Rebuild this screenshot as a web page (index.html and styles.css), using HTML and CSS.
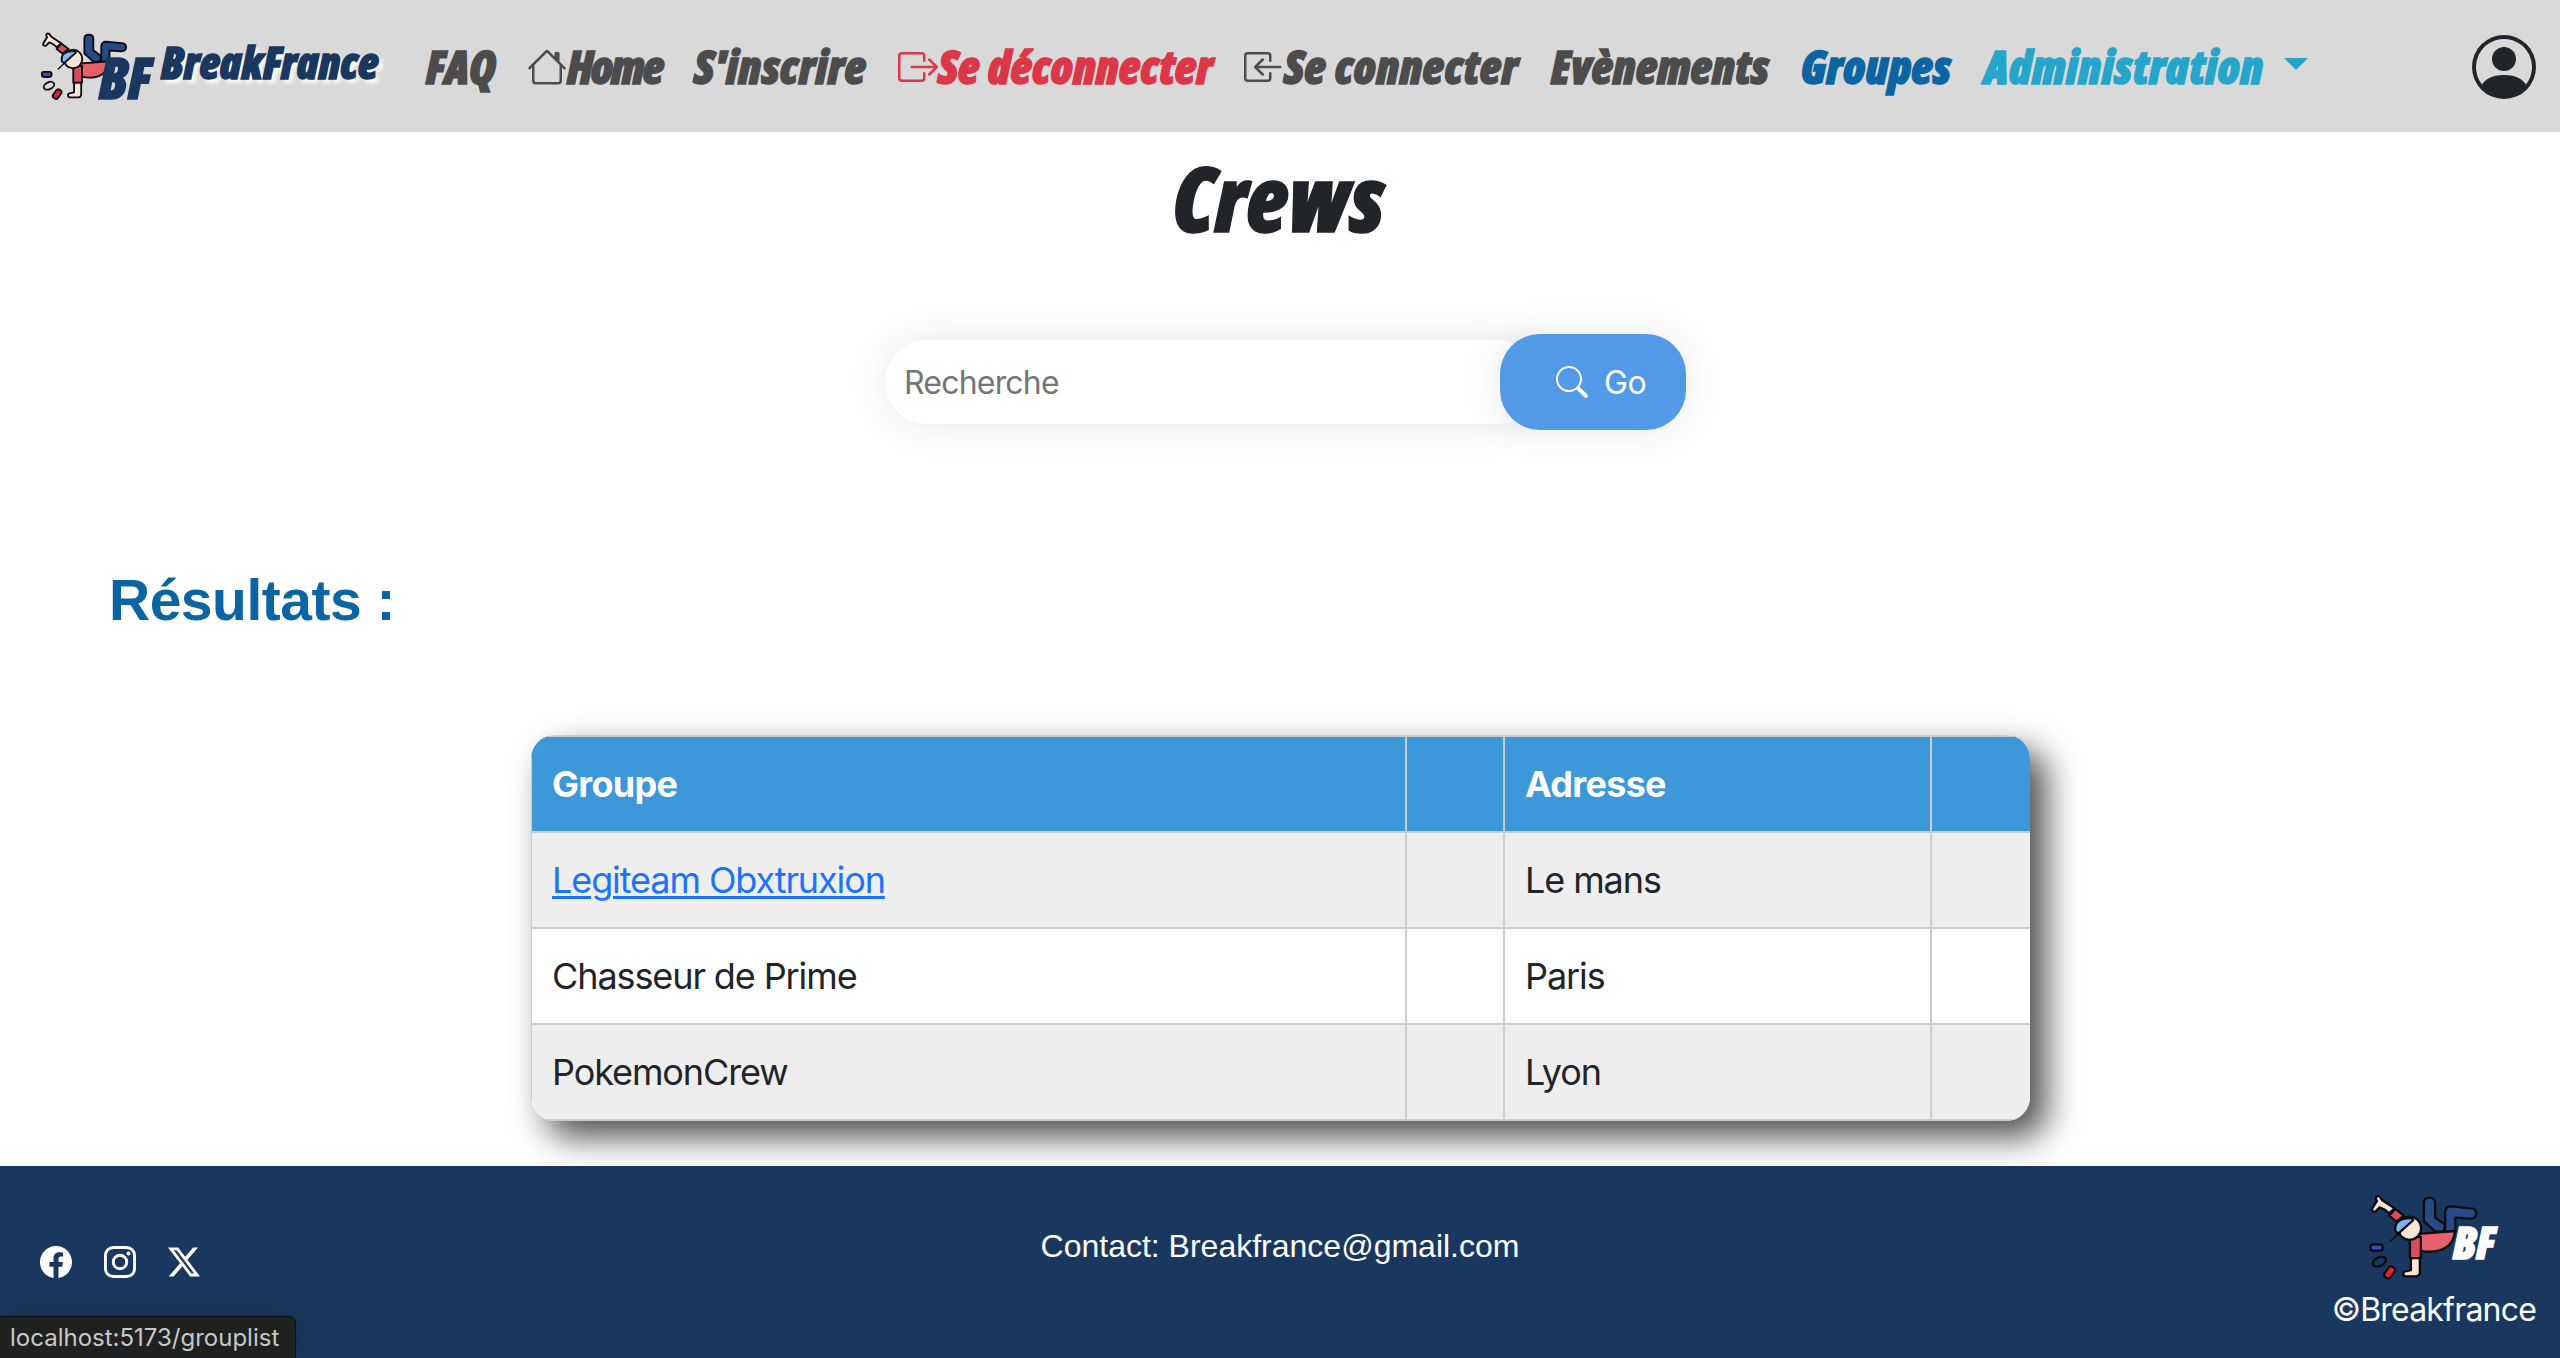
FILE: index.html
```html
<!DOCTYPE html>
<html lang="fr">
<head>
<meta charset="utf-8">
<title>BreakFrance - Crews</title>
<link rel="stylesheet" href="styles.css">
</head>
<body>
<svg class="defs" aria-hidden="true">
  <symbol id="breaker" viewBox="205 100 335 265">
    <g stroke="#0c0c10" stroke-width="7" stroke-linejoin="round" stroke-linecap="round">
      <path fill="#264a86" d="M372 129q0-15 17-15t17 15v44l30 23-4 20h-26l-34-31z"/>
      <path fill="#264a86" d="M436 216v-58q0-18 20-18l64 7q10 3 10 14 0 16-17 16l-46-3v42z"/>
      <path fill="#e8606c" d="M355 223l111-8c-4 44-38 70-104 59z"/>
      <path fill="#d94c59" d="M330 232h33v64h-33z"/>
      <path fill="#fbe3d6" d="M333 296h27v46q-2 9-12 9h-30q-8 0-8-8t10-8l13-3z"/>
      <path fill="#fbe3d6" d="M284 146l-37-24-8-11q-8-4-11 2-2 6 3 11l-13 20q-4 8 0 11 8 4 13-4l8-8q14 4 28 18z"/>
      <path fill="#d94c59" d="M286 148l26 20-22 18-23-18z"/>
      <circle cx="329" cy="206" r="35" fill="#fbe3d6"/>
      <path fill="#7fb4ee" d="M286 214q-4-40 50-38l4 6-45 40z"/>
      <path fill="none" stroke-width="5" d="M273 244l24-23"/>
      <rect x="211" y="255" width="37" height="19" rx="8" fill="#4246c4"/>
      <ellipse cx="238" cy="307" rx="21" ry="13" fill="none" transform="rotate(-25 238 307)"/>
      <rect x="250" y="328" width="38" height="22" rx="9" fill="#e91f2f" transform="rotate(-55 269 339)"/>
    </g>
  </symbol>
</svg>

<header class="navbar">
  <a class="brand">
    <span class="brand-logo">
      <svg class="brand-figure"><use href="#breaker"/></svg>
      <span class="brand-initials">BF</span>
    </span>
    <span class="brand-name">BreakFrance</span>
  </a>
  <nav class="menu">
    <a class="item faq">FAQ</a>
    <a class="item home"><svg class="icon" viewBox="0 0 16 16"><path d="M8.707 1.5a1 1 0 0 0-1.414 0L.646 8.146a.5.5 0 0 0 .708.708L2 8.207V13.5A1.5 1.5 0 0 0 3.5 15h9a1.5 1.5 0 0 0 1.5-1.5V8.207l.646.647a.5.5 0 0 0 .708-.708L13 5.793V2.5a.5.5 0 0 0-.5-.5h-1a.5.5 0 0 0-.5.5v1.293L8.707 1.5ZM13 7.207V13.5a.5.5 0 0 1-.5.5h-9a.5.5 0 0 1-.5-.5V7.207l5-5 5 5Z"/></svg><span>Home</span></a>
    <a class="item signup">S'inscrire</a>
    <a class="item logout"><svg class="icon" viewBox="0 0 16 16"><path d="M10 12.5a.5.5 0 0 1-.5.5h-8a.5.5 0 0 1-.5-.5v-9a.5.5 0 0 1 .5-.5h8a.5.5 0 0 1 .5.5v2a.5.5 0 0 0 1 0v-2A1.5 1.5 0 0 0 9.5 2h-8A1.5 1.5 0 0 0 0 3.5v9A1.5 1.5 0 0 0 1.5 14h8a1.5 1.5 0 0 0 1.5-1.5v-2a.5.5 0 0 0-1 0v2z"/><path d="M15.854 8.354a.5.5 0 0 0 0-.708l-3-3a.5.5 0 0 0-.708.708L14.293 7.5H5.5a.5.5 0 0 0 0 1h8.793l-2.147 2.146a.5.5 0 0 0 .708.708l3-3z"/></svg><span>Se déconnecter</span></a>
    <a class="item login"><svg class="icon" viewBox="0 0 16 16"><path d="M10 3.5a.5.5 0 0 0-.5-.5h-8a.5.5 0 0 0-.5.5v9a.5.5 0 0 0 .5.5h8a.5.5 0 0 0 .5-.5v-2a.5.5 0 0 1 1 0v2A1.5 1.5 0 0 1 9.5 14h-8A1.5 1.5 0 0 1 0 12.5v-9A1.5 1.5 0 0 1 1.5 2h8A1.5 1.5 0 0 1 11 3.5v2a.5.5 0 0 1-1 0v-2z"/><path d="M4.146 8.354a.5.5 0 0 1 0-.708l3-3a.5.5 0 1 1 .708.708L5.707 7.5H14.5a.5.5 0 0 1 0 1H5.707l2.147 2.146a.5.5 0 0 1-.708.708l-3-3z"/></svg><span>Se connecter</span></a>
    <a class="item events">Evènements</a>
    <a class="item groups">Groupes</a>
    <a class="item admin"><span>Administration</span><i class="caret"></i></a>
  </nav>
  <svg class="profile" viewBox="0 0 16 16"><path d="M11 6a3 3 0 1 1-6 0 3 3 0 0 1 6 0z"/><path fill-rule="evenodd" d="M0 8a8 8 0 1 1 16 0A8 8 0 0 1 0 8zm8-7a7 7 0 0 0-5.468 11.37C3.242 11.226 4.805 10 8 10s4.757 1.225 5.468 2.37A7 7 0 0 0 8 1z"/></svg>
</header>

<main class="page">
  <h1 class="title">Crews</h1>
  <form class="search">
    <div class="search-field">Recherche</div>
    <button class="search-button" type="button"><svg class="search-icon" viewBox="0 0 16 16"><path d="M11.742 10.344a6.5 6.5 0 1 0-1.397 1.398h-.001c.03.04.062.078.098.115l3.85 3.85a1 1 0 0 0 1.415-1.414l-3.85-3.85a1.007 1.007 0 0 0-.115-.1zM12 6.5a5.5 5.5 0 1 1-11 0 5.5 5.5 0 0 1 11 0z"/></svg><span>Go</span></button>
  </form>
  <h2 class="results">Résultats :</h2>
  <div class="card">
    <table class="crews">
      <colgroup><col class="c1"><col class="c2"><col class="c3"><col class="c4"></colgroup>
      <thead><tr><th>Groupe</th><th></th><th>Adresse</th><th></th></tr></thead>
      <tbody>
        <tr><td><a class="crew-link">Legiteam Obxtruxion</a></td><td></td><td>Le mans</td><td></td></tr>
        <tr><td>Chasseur de Prime</td><td></td><td>Paris</td><td></td></tr>
        <tr><td>PokemonCrew</td><td></td><td>Lyon</td><td></td></tr>
      </tbody>
    </table>
  </div>
</main>

<footer class="footer">
  <div class="social">
    <svg viewBox="0 0 16 16"><path d="M16 8.049c0-4.446-3.582-8.05-8-8.05C3.58 0-.002 3.603-.002 8.05c0 4.017 2.926 7.347 6.75 7.951v-5.625h-2.03V8.05H6.75V6.275c0-2.017 1.195-3.131 3.022-3.131.876 0 1.791.157 1.791.157v1.98h-1.009c-.993 0-1.303.621-1.303 1.258v1.51h2.218l-.354 2.326H9.25V16c3.824-.604 6.75-3.934 6.75-7.951z"/></svg>
    <svg viewBox="0 0 16 16"><path fill-rule="evenodd" d="M4.7 0h6.6A4.7 4.7 0 0 1 16 4.700v6.600A4.700 4.700 0 0 1 11.300 16H4.700A4.700 4.700 0 0 1 0 11.300V4.700A4.700 4.700 0 0 1 4.700 0zm.1 1.440A3.360 3.360 0 0 0 1.440 4.800v6.400a3.360 3.360 0 0 0 3.360 3.360h6.400a3.360 3.360 0 0 0 3.360-3.360V4.800a3.360 3.360 0 0 0-3.360-3.360zM8 3.892a4.108 4.108 0 1 1 0 8.216 4.108 4.108 0 0 1 0-8.216zm0 1.441a2.667 2.667 0 1 0 0 5.334 2.667 2.667 0 0 0 0-5.334z"/><circle cx="12.270" cy="3.730" r=".96"/></svg>
    <svg viewBox="0 0 16 16"><path d="M12.600.75h2.454l-5.360 6.142L16 15.250h-4.937l-3.867-5.070-4.425 5.070H.316l5.733-6.570L0 .75h5.063l3.495 4.633L12.601.75Zm-.860 13.028h1.360L4.323 2.145H2.865l8.875 11.633Z"/></svg>
  </div>
  <p class="contact">Contact: Breakfrance@gmail.com</p>
  <div class="signature">
    <div class="footer-logo">
      <svg class="footer-figure"><use href="#breaker"/></svg>
      <span class="footer-initials">BF</span>
    </div>
    <p class="copyright">©Breakfrance</p>
  </div>
</footer>
<div class="status">localhost:5173/grouplist</div>
</body>
</html>
```
FILE: styles.css
```css
* { box-sizing: border-box; }
body {
  margin: 0;
  height: 1358px;
  display: flex;
  flex-direction: column;
  overflow: hidden;
  position: relative;
  background: #fff;
  color: #212529;
  font-family: Inter, "Liberation Sans", sans-serif;
  font-size: 36px;
}
p, h1, h2 { margin: 0; }
svg { display: block; fill: currentColor; flex: none; }
.defs { position: absolute; width: 0; height: 0; }

/* Display lettering */
.brand-initials, .brand-name, .item, .title, .footer-initials {
  font-family: "Open Sans", sans-serif;
  font-weight: 800;
  font-style: italic;
  font-stretch: 75%;
  -webkit-text-stroke: 1.5px currentColor;
  white-space: nowrap;
}

/* Navigation */
.navbar {
  height: 132px;
  flex: none;
  display: flex;
  align-items: center;
  padding: 0 24px 0 40px;
  background: #d9d9d9;
}
.brand { display: flex; width: 386px; height: 132px; color: #1a385f; }
.brand-logo { position: relative; width: 121px; }
.brand-figure { width: 89px; height: 70px; margin: 31px 0 0; }
.brand-initials { position: absolute; left: 59px; top: 39px; font-size: 56px; line-height: 76px; }
.brand-name {
  padding-top: 34px;
  font-size: 44px;
  line-height: 56px;
  letter-spacing: .2px;
  text-shadow: 4px 4px 4px #fff;
}
.menu {
  flex: 1;
  display: grid;
  grid-template-columns: 101px 167px 204px 346px 307px 250px 183px auto;
  color: #4c4c4c;
  font-size: 46px;
  line-height: 62px;
}
.item { display: flex; align-items: center; height: 62px; }
.icon { width: 40px; height: 40px; margin-top: 1px; }
.home { letter-spacing: -1.8px; }
.signup, .login { letter-spacing: .6px; }
.logout { color: #dc3748; letter-spacing: .3px; }
.events { letter-spacing: .2px; }
.groups { color: #0c65a3; letter-spacing: .4px; }
.admin { color: #25a5c9; letter-spacing: .7px; }
.caret { margin: -4px 0 0 20px; border: 12px solid transparent; border-top-color: currentColor; border-bottom: 0; }
.profile { width: 64px; height: 64px; margin-top: 2px; }

/* Content */
.page { flex: 1; display: flex; flex-direction: column; align-items: center; min-height: 0; }
.title { font-size: 90px; line-height: 120px; margin: 5px 3px 4px 0; height: 120px; }
.search { display: flex; align-items: center; margin: 73px 0 0 11px; }
.search-field {
  width: 655px;
  height: 84px;
  margin-right: -40px;
  padding-left: 19px;
  border-radius: 42px;
  font-size: 32px;
  line-height: 86px;
  letter-spacing: -.8px;
  color: #757575;
  background: #fff;
  box-shadow: 0 0 40px rgba(0, 0, 0, .1);
}
.search-button {
  position: relative;
  display: flex;
  align-items: center;
  gap: 16px;
  width: 186px;
  height: 96px;
  padding: 0 0 0 56px;
  border: 0;
  border-radius: 40px;
  background: #529ae7;
  color: #fff;
  font: 32px Inter, sans-serif;
  letter-spacing: -.5px;
  box-shadow: 0 0 40px rgba(0, 0, 0, .1);
}
.search-icon { width: 32px; height: 32px; }
.results {
  align-self: flex-start;
  margin: 136px 0 0 109px;
  font: bold 57px/68px "Liberation Sans", sans-serif;
  letter-spacing: -.5px;
  color: #0c65a3;
}
.card {
  width: 1499px;
  margin: 101px 0 0 1px;
  border-radius: 24px;
  overflow: hidden;
  box-shadow: 16px 16px 34px rgba(0, 0, 0, .7);
}
.crews { width: 1501px; margin-left: -1px; border-collapse: collapse; table-layout: fixed; }
.c1 { width: 875px; }
.c2 { width: 98px; }
.c3 { width: 427px; }
.c4 { width: 100px; }
.crews th, .crews td {
  height: 96px;
  padding: 0 20px;
  border: 2px solid #ccc;
  text-align: left;
  letter-spacing: -1.1px;
}
.crews th { background: #3c98d9; color: #fff; font-weight: 700; letter-spacing: -.7px; }
.crews tbody tr { background: #fff; }
.crews tbody tr:nth-child(odd) { background: #eee; }
.crew-link { color: #1a73ff; text-decoration: underline; text-decoration-thickness: 3px; text-underline-offset: 3px; }

/* Footer */
.footer {
  position: relative;
  flex: none;
  display: grid;
  grid-template-columns: 1fr auto 1fr;
  height: 192px;
  padding: 0 24px 0 40px;
  background: #1a385f;
  color: #fff;
}
.social { display: flex; gap: 32px; padding-top: 80px; }
.social svg { width: 32px; height: 32px; }
.contact { padding: 60px 0 0; margin-left: -16px; font: 32px/40px "Liberation Sans", sans-serif; }
.signature { display: flex; flex-direction: column; align-items: flex-end; }
.footer-logo { position: relative; width: 168px; height: 120px; }
.footer-figure { width: 112px; height: 88px; margin: 27px 0 0; }
.footer-initials { position: absolute; left: 85px; top: 48px; font-size: 45px; line-height: 56px; }
.copyright { font-size: 32px; line-height: 44px; margin-top: 2px; letter-spacing: -.8px; }

/* Browser link preview */
.status {
  position: absolute;
  left: 0;
  bottom: 0;
  width: 296px;
  height: 42px;
  padding-left: 10px;
  border: solid #0e1011;
  border-width: 1px 1px 0 0;
  border-top-right-radius: 7px;
  background: #1f2120;
  color: #c7c8c8;
  font-size: 24px;
  line-height: 41px;
  box-shadow: 0 0 24px rgba(0, 0, 0, .2);
}
```
